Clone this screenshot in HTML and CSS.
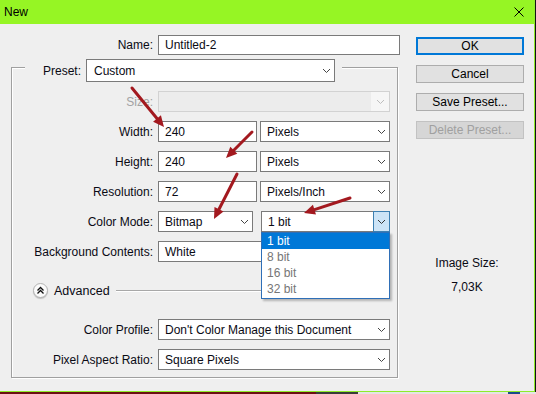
FILE: index.html
```html
<!DOCTYPE html>
<html>
<head>
<meta charset="utf-8">
<link rel="stylesheet" href="styles.css">
</head>
<body>
<div class="window">
  <div class="titlebar">
    <span class="title">New</span>
    <svg class="close" width="10" height="10" viewBox="0 0 10 10"><path d="M0.5 0.5L9.5 9.5M9.5 0.5L0.5 9.5" stroke="#000" stroke-width="1" fill="none"/></svg>
  </div>
  <div class="main">
    <div class="left">
      <div class="row name-row">
        <span class="lbl">Name:</span>
        <div class="input w-name">Untitled-2</div>
      </div>
      <div class="group">
        <div class="legend">
          <span class="lbl-inline">Preset:</span>
          <div class="select w-preset">Custom<svg class="chev" width="9" height="6" viewBox="0 0 9 6"><path d="M1 1L4.5 4.5L8 1" stroke="#444" fill="none"/></svg></div>
        </div>
        <div class="rows">
          <div class="row">
            <span class="lbl disabled">Size:</span>
            <div class="select w-full disabled-select"><span class="dis-arrow"><svg width="9" height="6" viewBox="0 0 9 6"><path d="M1 1L4.5 4.5L8 1" stroke="#bdbdbd" fill="none"/></svg></span></div>
          </div>
          <div class="row">
            <span class="lbl">Width:</span>
            <div class="pair tight">
              <div class="input w-num">240</div>
              <div class="select w-unit">Pixels<svg class="chev" width="9" height="6" viewBox="0 0 9 6"><path d="M1 1L4.5 4.5L8 1" stroke="#444" fill="none"/></svg></div>
            </div>
          </div>
          <div class="row">
            <span class="lbl">Height:</span>
            <div class="pair tight">
              <div class="input w-num">240</div>
              <div class="select w-unit">Pixels<svg class="chev" width="9" height="6" viewBox="0 0 9 6"><path d="M1 1L4.5 4.5L8 1" stroke="#444" fill="none"/></svg></div>
            </div>
          </div>
          <div class="row">
            <span class="lbl">Resolution:</span>
            <div class="pair tight">
              <div class="input w-num">72</div>
              <div class="select w-unit">Pixels/Inch<svg class="chev" width="9" height="6" viewBox="0 0 9 6"><path d="M1 1L4.5 4.5L8 1" stroke="#444" fill="none"/></svg></div>
            </div>
          </div>
          <div class="row">
            <span class="lbl">Color Mode:</span>
            <div class="pair wide">
              <div class="select w-mode">Bitmap<svg class="chev" width="9" height="6" viewBox="0 0 9 6"><path d="M1 1L4.5 4.5L8 1" stroke="#444" fill="none"/></svg></div>
              <div class="select w-bit open">1 bit<span class="chevbox"><svg width="9" height="6" viewBox="0 0 9 6"><path d="M1 1L4.5 4.5L8 1" stroke="#333" fill="none"/></svg></span></div>
            </div>
          </div>
          <div class="row">
            <span class="lbl">Background Contents:</span>
            <div class="select w-full">White<svg class="chev" width="9" height="6" viewBox="0 0 9 6"><path d="M1 1L4.5 4.5L8 1" stroke="#444" fill="none"/></svg></div>
          </div>
          <div class="row adv-row">
            <span class="adv-btn"><svg width="9" height="9" viewBox="0 0 9 9"><path d="M1.5 4.5L4.5 1.5L7.5 4.5M1.5 7.5L4.5 4.5L7.5 7.5" stroke="#111" stroke-width="1.3" fill="none"/></svg></span>
            <span class="adv-text">Advanced</span>
            <span class="adv-line"></span>
          </div>
          <div class="row after-adv">
            <span class="lbl">Color Profile:</span>
            <div class="select w-full">Don't Color Manage this Document<svg class="chev" width="9" height="6" viewBox="0 0 9 6"><path d="M1 1L4.5 4.5L8 1" stroke="#444" fill="none"/></svg></div>
          </div>
          <div class="row">
            <span class="lbl">Pixel Aspect Ratio:</span>
            <div class="select w-full">Square Pixels<svg class="chev" width="9" height="6" viewBox="0 0 9 6"><path d="M1 1L4.5 4.5L8 1" stroke="#444" fill="none"/></svg></div>
          </div>
        </div>
      </div>
    </div>
    <div class="right">
      <div class="btn default">OK</div>
      <div class="btn">Cancel</div>
      <div class="btn">Save Preset...</div>
      <div class="btn disabled-btn">Delete Preset...</div>
      <div class="imgsize">
        <div>Image Size:</div>
        <div>7,03K</div>
      </div>
    </div>
  </div>
  <div class="dropdown">
    <div class="opt sel">1 bit</div>
    <div class="opt">8 bit</div>
    <div class="opt">16 bit</div>
    <div class="opt">32 bit</div>
  </div>
  <svg class="arrows" width="536" height="394" viewBox="0 0 536 394">
    <g stroke="#a3191f" stroke-width="3" stroke-linecap="round" fill="none">
      <path d="M132 88L157 118.5"/>
      <path d="M252 132L233.8 150.2"/>
      <path d="M237 174L219 209.2"/>
      <path d="M350 198L314.5 209.6"/>
    </g>
    <g fill="#a3191f">
      <path d="M164 127L153.1 121.7L160.9 115.3Z"/>
      <path d="M226 158L230.3 146.7L237.3 153.7Z"/>
      <path d="M214 219L214.5 206.9L223.5 211.5Z"/>
      <path d="M304 213L312.9 204.8L316 214.4Z"/>
    </g>
  </svg>
</div>
<div class="taskbar">
  <span class="tb-red"></span><span class="tb-dark"></span><span class="tb-light"></span><span class="tb-blue"></span><span class="tb-rest"></span>
</div>
</body>
</html>
```
FILE: styles.css
```css
* { box-sizing: border-box; }
html, body { margin: 0; padding: 0; }
body {
  width: 536px;
  height: 394px;
  overflow: hidden;
  background: #111511;
  font-family: "Liberation Sans", Arial, sans-serif;
  font-size: 12px;
  color: #0a0a14;
}
.window {
  position: relative;
  width: 535px;
  height: 392px;
  background: #efefef;
  border-right: 1px solid #8fec2a;
  border-bottom: 1px solid #8fec2a;
  display: flex;
  flex-direction: column;
}
.titlebar {
  height: 24px;
  flex: none;
  background: #96f524;
  display: flex;
  align-items: center;
  justify-content: space-between;
  padding: 0 10px 0 4px;
}
.title { color: #000; }
.close { display: block; }
.main { display: flex; flex: 1; }
.left { width: 405px; padding-top: 11px; }
.right {
  width: 108px;
  margin-left: 11px;
  padding-top: 13px;
  display: flex;
  flex-direction: column;
  gap: 10px;
}
.row {
  display: flex;
  align-items: center;
  height: 21px;
  gap: 5px;
}
.name-row { height: 20px; }
.name-row .lbl { width: 153px; }
.lbl { width: 141px; text-align: right; flex: none; white-space: nowrap; }
.lbl.disabled { color: #a3a3a3; }
.input, .select {
  height: 100%;
  border: 1px solid #7a7a7a;
  background: #fff;
  padding-left: 6px;
  display: flex;
  align-items: center;
  flex: none;
  white-space: nowrap;
}
.select .chev { margin-left: auto; margin-right: 3px; flex: none; }
.w-name { width: 242px; }
.w-full { width: 232px; }
.w-num { width: 99px; }
.w-unit { width: 130px; }
.w-mode { width: 95px; }
.w-bit { width: 129px; }
.w-preset { width: 249px; padding-left: 7px; }
.pair { display: flex; height: 100%; }
.pair.tight { gap: 3px; }
.pair.wide { gap: 8px; }
.group {
  margin: 12px 0 0 11px;
  width: 387px;
  border: 1px solid #a0a0a0;
  box-shadow: 1px 1px 0 #fff, inset 1px 1px 0 #fff;
  padding-bottom: 7px;
}
.legend {
  margin: -9px 0 0 13px;
  width: 317px;
  height: 23px;
  background: #efefef;
  display: flex;
  align-items: center;
  justify-content: flex-end;
  gap: 5px;
  padding-right: 7px;
}
.rows {
  margin-top: 9px;
  display: flex;
  flex-direction: column;
  gap: 9px;
}
.disabled-select {
  background: #ececec;
  border-color: #d2d2d2;
  padding-left: 0;
  justify-content: flex-end;
}
.dis-arrow {
  width: 18px;
  height: 100%;
  background: #f6f6f6;
  display: flex;
  align-items: center;
  justify-content: center;
}
.open { padding-right: 0; }
.chevbox {
  margin-left: auto;
  width: 17px;
  height: 21px;
  margin-top: -1px;
  margin-bottom: -1px;
  margin-right: -1px;
  background: #cce4f7;
  border: 1px solid #3c7fb1;
  display: flex;
  align-items: center;
  justify-content: center;
}
.adv-row { margin-top: 9px; gap: 0; }
.adv-btn {
  width: 15px;
  height: 15px;
  margin-left: 21px;
  border-radius: 50%;
  border: 1px solid #b4b4b4;
  background: #fbfbfb;
  box-shadow: 0 1px 1px rgba(0,0,0,0.2);
  display: flex;
  align-items: center;
  justify-content: center;
  flex: none;
}
.adv-text { margin-left: 6px; font-size: 12.5px; }
.adv-line {
  flex: 1;
  height: 2px;
  margin: 1px 8px 0 6px;
  border-top: 1px solid #a8a8a8;
  border-bottom: 1px solid #fff;
}
.after-adv { margin-top: 9px; }
.btn {
  height: 18px;
  border: 1px solid #adadad;
  background: #e1e1e1;
  display: flex;
  align-items: center;
  justify-content: center;
  color: #000;
}
.btn.default { border: 2px solid #0078d7; }
.btn.disabled-btn { background: #d6d6d6; border-color: #c2c2c2; color: #a0a0a0; }
.imgsize {
  margin-top: 107px;
  padding-right: 6px;
  display: flex;
  flex-direction: column;
  align-items: center;
  gap: 10px;
  line-height: 14px;
}
.dropdown {
  position: absolute;
  left: 261px;
  top: 232px;
  width: 129px;
  border: 1px solid #2f6fb7;
  background: #fff;
  padding-bottom: 1px;
  box-shadow: 2px 2px 2px rgba(0,0,0,0.25);
}
.opt {
  height: 16px;
  line-height: 16px;
  padding-left: 5px;
  color: #767676;
}
.opt.sel { background: #0078d7; color: #fff; }
.arrows { position: absolute; left: 0; top: 0; pointer-events: none; }
.taskbar { display: flex; height: 2px; }
.taskbar span { height: 2px; display: block; }
.tb-red { width: 316px; background: #6b0f14; }
.tb-dark { width: 42px; background: #3a3a3a; }
.tb-light { width: 150px; background: #e4e4e4; }
.tb-blue { width: 12px; background: #1b4a8a; }
.tb-rest { flex: 1; background: #e4e4e4; }
```
